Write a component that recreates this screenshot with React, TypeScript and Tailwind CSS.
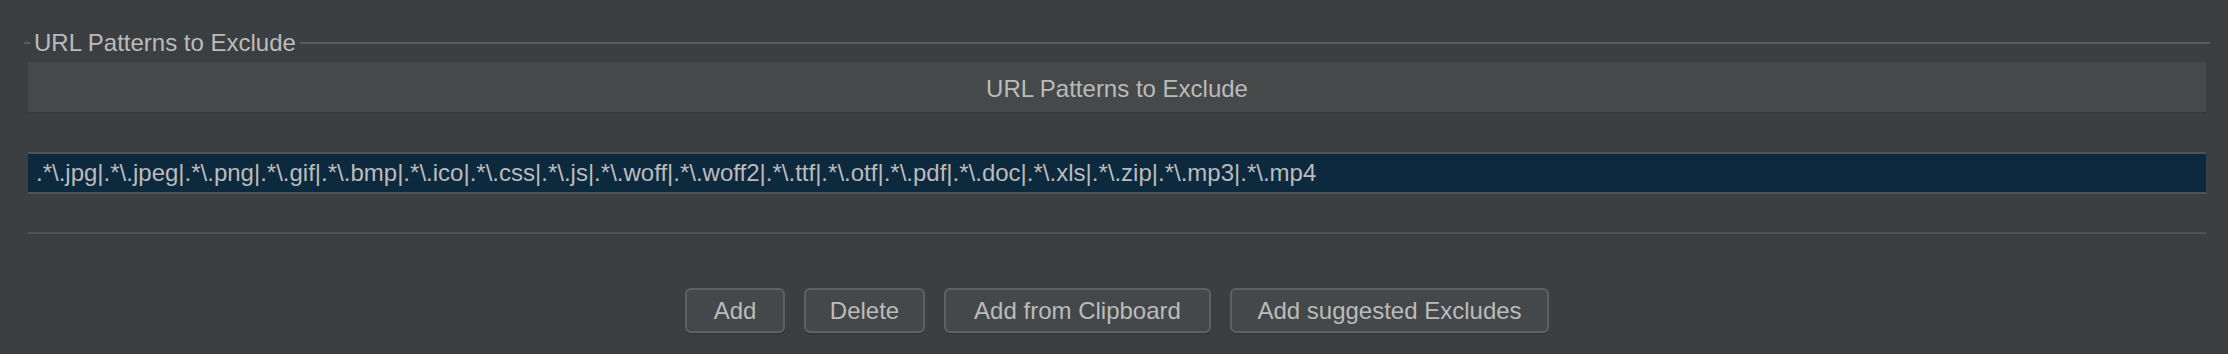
import React from 'react';

const PATTERNS =
  '.*\\.jpg|.*\\.jpeg|.*\\.png|.*\\.gif|.*\\.bmp|.*\\.ico|.*\\.css|.*\\.js|.*\\.woff|.*\\.woff2|.*\\.ttf|.*\\.otf|.*\\.pdf|.*\\.doc|.*\\.xls|.*\\.zip|.*\\.mp3|.*\\.mp4';

const buttons = [
  { label: 'Add', w: 'w-[100px]' },
  { label: 'Delete', w: 'w-[121px]' },
  { label: 'Add from Clipboard', w: 'w-[267px]' },
  { label: 'Add suggested Excludes', w: 'w-[319px]' },
];

export default function App() {
  return (
    <div
      className="w-[2228px] h-[354px] bg-[#3c3f41] text-[#bbbbbb] text-[24px] overflow-hidden pl-[24px] pr-[18px] pt-[29px] select-none"
      style={{ fontFamily: '"Liberation Sans", Arial, sans-serif' }}
    >
      {/* Titled border */}
      <div className="flex items-center h-[28px]">
        <div className="w-[6px] h-[2px] bg-[#5a5b5c]"></div>
        <span className="px-[4px] leading-[28px]">URL Patterns to Exclude</span>
        <div className="flex-1 h-[2px] bg-[#5a5b5c]"></div>
      </div>

      <div className="px-[4px]">
        {/* Table header */}
        <div className="mt-[5px] h-[52px] pt-[4px] bg-[#45494a] border-b-2 border-[#37393b] flex items-center justify-center">
          URL Patterns to Exclude
        </div>

        {/* Selected row */}
        <div className="mt-[38px] h-[42px] bg-[#0d293e] border-y-2 border-[#515456] flex items-center pl-[8px] whitespace-nowrap">
          {PATTERNS}
        </div>

        <div className="mt-[38px] h-[2px] bg-[#4f5254]"></div>

        {/* Buttons */}
        <div className="mt-[54px] flex justify-center gap-[19px]">
          {buttons.map((b) => (
            <button
              key={b.label}
              className={`${b.w} h-[45px] rounded-[6px] border-2 border-[#5e6162] bg-[#44484a] text-[#bbbbbb] text-[24px] shadow-[0_2px_0_#363839] flex items-center justify-center`}
            >
              {b.label}
            </button>
          ))}
        </div>
      </div>
    </div>
  );
}
